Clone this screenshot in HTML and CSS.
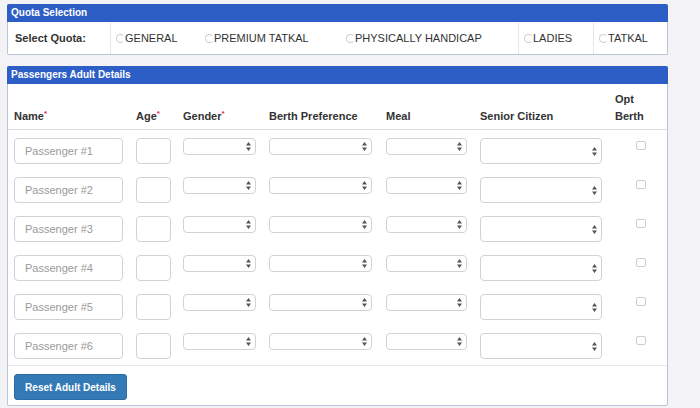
FILE: index.html
```html
<!DOCTYPE html>
<html lang="en">
<head>
  <meta charset="UTF-8">
  <meta name="viewport" content="width=device-width, initial-scale=1">
  <title>Passenger Details</title>
  <link rel="stylesheet" href="styles.css">
</head>
<body>
  <div class="page">

    <div class="panel quota-panel">
      <div class="panel-head">Quota Selection</div>
      <div class="quota-row">
        <div class="q-cell q-label">Select Quota:</div>
        <div class="q-cell q-general divided"><span class="radio"></span>GENERAL</div>
        <div class="q-cell q-premium"><span class="radio"></span>PREMIUM TATKAL</div>
        <div class="q-cell q-handicap"><span class="radio"></span>PHYSICALLY HANDICAP</div>
        <div class="q-cell q-ladies divided"><span class="radio"></span>LADIES</div>
        <div class="q-cell q-tatkal divided"><span class="radio"></span>TATKAL</div>
      </div>
    </div>

    <div class="panel passenger-panel">
      <div class="panel-head">Passengers Adult Details</div>
      <table class="pax-table">
        <colgroup>
          <col class="c-name">
          <col class="c-age">
          <col class="c-gender">
          <col class="c-berth">
          <col class="c-meal">
          <col class="c-senior">
          <col class="c-opt">
        </colgroup>
        <thead>
          <tr>
            <th>Name<span class="req">*</span></th>
            <th>Age<span class="req">*</span></th>
            <th>Gender<span class="req">*</span></th>
            <th>Berth Preference</th>
            <th>Meal</th>
            <th>Senior Citizen</th>
            <th class="opt-head">Opt Berth</th>
          </tr>
        </thead>
        <tbody id="paxRows"></tbody>
      </table>
      <div class="panel-foot">
        <button class="reset-btn">Reset Adult Details</button>
      </div>
    </div>

  </div>

  <script>
    var arrows = '<svg class="arrows" width="5" height="9" viewBox="0 0 5 9"><path d="M2.5 0L5 3.6H0z M0 5.4H5L2.5 9z" fill="#555"/></svg>';

    function selectBox(cls) {
      return '<span class="sel ' + cls + '"><select></select>' + arrows + '</span>';
    }

    var rows = '';
    for (var i = 1; i <= 6; i++) {
      rows += '<tr>' +
        '<td><input class="name-input" type="text" placeholder="Passenger #' + i + '"></td>' +
        '<td><input class="age-input" type="text"></td>' +
        '<td>' + selectBox('sel-gender') + '</td>' +
        '<td>' + selectBox('sel-berth') + '</td>' +
        '<td>' + selectBox('sel-meal') + '</td>' +
        '<td>' + selectBox('sel-senior') + '</td>' +
        '<td class="opt-cell"><input class="opt-check" type="checkbox"></td>' +
        '</tr>';
    }
    document.getElementById('paxRows').innerHTML = rows;
  </script>
</body>
</html>
```

FILE: styles.css
```css
body {
  margin: 0;
  padding: 0;
  background: #f3f3f5;
  font-family: "Liberation Sans", Arial, sans-serif;
  font-size: 11px;
  color: #333;
}
.page {
  padding: 4px 0 0 7px;
}
.panel {
  width: 661px;
  box-sizing: border-box;
  background: #fff;
  border: 1px solid #b7c4da;
  border-top: none;
  border-radius: 2px;
}
.passenger-panel {
  margin-top: 11px;
}
.panel-head {
  background: #2d5ec6;
  color: #fff;
  font-weight: bold;
  font-size: 10px;
  height: 18px;
  line-height: 18px;
  padding-left: 4px;
  margin: 0 -1px;
  border-radius: 2px 2px 0 0;
}

/* quota row */
.quota-row {
  display: flex;
  height: 32px;
}
.q-cell {
  display: flex;
  align-items: center;
  box-sizing: border-box;
  padding-left: 5px;
  text-transform: uppercase;
}
.q-cell.divided {
  border-left: 1px solid #e6e6e6;
}
.q-label {
  width: 102px;
  padding-left: 7px;
  font-weight: bold;
  text-transform: none;
}
.q-general { width: 90px; }
.q-premium { width: 141px; }
.q-handicap { width: 177px; }
.q-ladies { width: 75px; }
.q-tatkal { flex: 1; }
.radio {
  display: inline-block;
  width: 9px;
  height: 9px;
  box-sizing: border-box;
  border: 1px solid #cfcfcf;
  border-right-color: transparent;
  border-radius: 50%;
}

/* passenger table */
.pax-table {
  width: 659px;
  border-collapse: collapse;
  table-layout: fixed;
}
.c-name { width: 122px; }
.c-age { width: 47px; }
.c-gender { width: 86px; }
.c-berth { width: 117px; }
.c-meal { width: 94px; }
.c-senior { width: 135px; }
.c-opt { width: 58px; }
.pax-table th {
  height: 41px;
  padding: 0 0 4px 6px;
  text-align: left;
  vertical-align: bottom;
  font-weight: bold;
  line-height: 17px;
  border-bottom: 1px solid #dedede;
}
.pax-table th.opt-head {
  padding-right: 12px;
}
.req {
  color: #e0245e;
  font-size: 8px;
  vertical-align: top;
  line-height: 12px;
}
.pax-table td {
  height: 26px;
  padding: 8px 0 5px 6px;
  vertical-align: top;
}
.pax-table tbody tr:last-child td {
  padding-bottom: 6px;
  border-bottom: 1px solid #e8e8e8;
}
.name-input,
.age-input {
  display: block;
  box-sizing: border-box;
  height: 26px;
  margin: 0;
  border: 1px solid #d2d2d2;
  border-radius: 4px;
  padding: 0 10px;
  font-family: inherit;
  font-size: 11px;
  color: #333;
}
.name-input { width: 109px; }
.age-input { width: 35px; }
.name-input::placeholder {
  color: #9a9a9a;
}
.sel {
  position: relative;
  display: block;
  width: max-content;
}
.sel select {
  display: block;
  -webkit-appearance: none;
  appearance: none;
  box-sizing: border-box;
  height: 17px;
  margin: 0;
  border: 1px solid #d2d2d2;
  border-radius: 4px;
  background: #fff;
}
.sel .arrows {
  position: absolute;
  right: 5px;
  top: 4px;
}
.sel-gender select { width: 73px; }
.sel-berth select { width: 103px; }
.sel-meal select { width: 81px; }
.sel-senior select {
  width: 122px;
  height: 26px;
}
.sel-senior .arrows {
  top: 9px;
}
.opt-cell {
  text-align: center;
}
.opt-check {
  -webkit-appearance: none;
  appearance: none;
  display: inline-block;
  width: 10px;
  height: 9px;
  margin: 3px 0 0 0;
  border: 1px solid #cdcdcd;
  border-radius: 2px;
  background: #fff;
}

.panel-foot {
  padding: 8px 6px 5px;
}
.reset-btn {
  display: block;
  width: 113px;
  height: 26px;
  padding: 0;
  background: #337ab7;
  border: 1px solid #2e6da4;
  border-radius: 3px;
  color: #fff;
  font-family: inherit;
  font-size: 10px;
  font-weight: bold;
}
```
